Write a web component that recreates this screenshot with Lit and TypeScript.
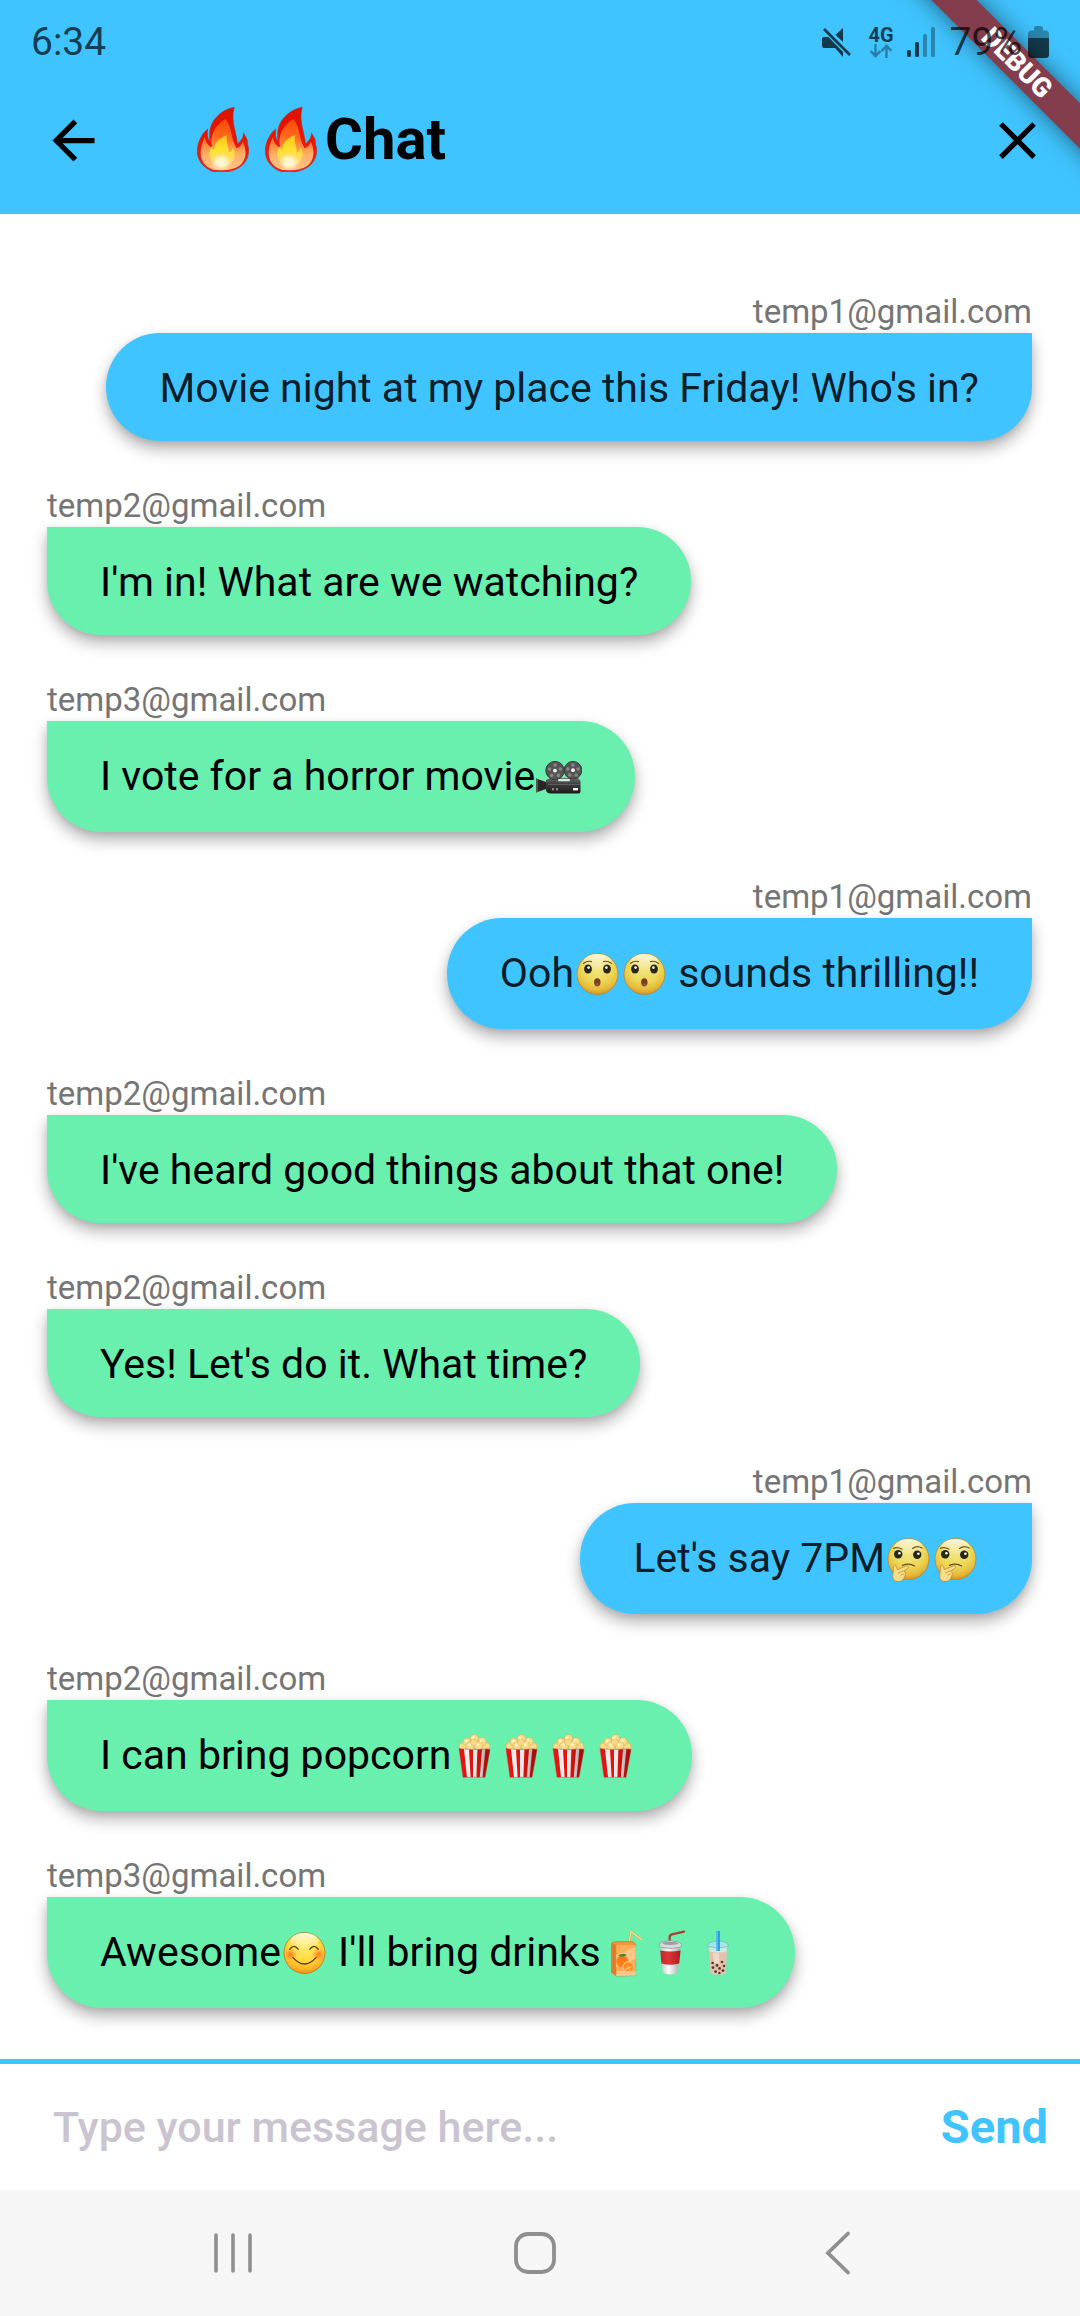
import { LitElement, html, css, svg } from "lit";
import { customElement, property, state } from "lit/decorators.js";

const sphere = svg`
  <defs>
    <radialGradient id="skin" cx="0.5" cy="0.3" r="0.72">
      <stop offset="0" stop-color="#f3e78c" />
      <stop offset="0.55" stop-color="#ecd858" />
      <stop offset="0.82" stop-color="#e6b93a" />
      <stop offset="1" stop-color="#d98b1e" />
    </radialGradient>
    <linearGradient id="shine" x1="0" y1="0" x2="0" y2="1">
      <stop offset="0" stop-color="#fff" stop-opacity="0.75" />
      <stop offset="1" stop-color="#fff" stop-opacity="0" />
    </linearGradient>
  </defs>
  <circle cx="23.5" cy="24" r="20.5" fill="url(#skin)" stroke="#b9821f" stroke-width="0.7" />
  <ellipse cx="23.5" cy="12" rx="14" ry="8" fill="url(#shine)" />`;

const art: Record<string, { label: string; box: string; shape: unknown }> = {
  "🔥": {
    label: "fire",
    box: "0 0 151 195",
    shape: svg`
      <defs>
        <linearGradient id="f1" x1="0" y1="0" x2="0" y2="1">
          <stop offset="0" stop-color="#d91400" /><stop offset="0.4" stop-color="#e81400" />
          <stop offset="1" stop-color="#f02020" />
        </linearGradient>
        <linearGradient id="f2" x1="0" y1="0" x2="0" y2="1">
          <stop offset="0" stop-color="#f5460a" /><stop offset="0.35" stop-color="#ff6a1c" />
          <stop offset="0.7" stop-color="#ffb066" /><stop offset="1" stop-color="#ffc489" />
        </linearGradient>
        <linearGradient id="f3" x1="0" y1="0" x2="0" y2="1">
          <stop offset="0" stop-color="#ffc21e" /><stop offset="0.45" stop-color="#ffe22a" />
          <stop offset="1" stop-color="#ffd890" />
        </linearGradient>
        <radialGradient id="f4"><stop offset="0.4" stop-color="#fff6cf" />
          <stop offset="1" stop-color="#fff0b0" stop-opacity="0" /></radialGradient>
      </defs>
      <path d="M108 1C84 4 36 32 37 82L37 104C30 94 29 80 31 66C16 78 1 104 1 133C1 164 24 187 48 194H90C126 188 150 164 150 130C150 119 146 116 146 100C143 90 138 84 135 78C135 90 130 101 117 111C118 85 96 45 108 1Z" fill="url(#f1)" stroke="#a33a32" stroke-width="2" />
      <path d="M82 36C104 62 96 92 115 124C125 119 131 113 133 104C143 126 143 146 136 160C128 178 110 186 88 189H50C25 182 8 162 11 130C13 114 18 102 23 90C24 104 30 114 44 122C36 88 50 58 82 36Z" fill="url(#f2)" />
      <path d="M88 85C66 92 50 106 50 130C46 128 45 122 44 118C34 130 34 150 42 162C52 180 88 182 102 164C112 150 112 134 104 122C102 130 98 134 92 138C94 118 82 108 88 85Z" fill="url(#f3)" />
      <ellipse cx="70" cy="166" rx="30" ry="28" fill="url(#f4)" />`,
  },
  "😯": {
    label: "hushed face",
    box: "0 0 47 49",
    shape: svg`${sphere}
      <ellipse cx="14" cy="19" rx="3.9" ry="4.5" fill="#2a2616" /><ellipse cx="33" cy="19" rx="3.9" ry="4.5" fill="#2a2616" />
      <circle cx="14.6" cy="17.6" r="1.3" fill="#fff" /><circle cx="32.4" cy="17.6" r="1.3" fill="#fff" />
      <path d="M9.5 13.5Q13 10.5 17.5 11.6M37.5 13.5Q34 10.5 29.5 11.6" fill="none" stroke="#6b541c" stroke-width="1.1" stroke-linecap="round" />
      <ellipse cx="23.3" cy="32.3" rx="3.2" ry="4.1" fill="#7a3d1e" /><ellipse cx="23.3" cy="34.2" rx="2" ry="1.5" fill="#94503a" />`,
  },
  "🤔": {
    label: "thinking face",
    box: "0 0 47 49",
    shape: svg`${sphere}
      <circle cx="13.2" cy="19.2" r="4.2" fill="#2a2616" /><circle cx="32.2" cy="19.7" r="4.2" fill="#2a2616" />
      <circle cx="14.4" cy="18.2" r="1.3" fill="#fff" /><circle cx="33.4" cy="18.7" r="1.3" fill="#fff" />
      <path d="M8.5 13.3Q12.5 11.8 17 14.2M27.5 13.4Q32 10 37 13" fill="none" stroke="#6b541c" stroke-width="1.2" stroke-linecap="round" />
      <path d="M17.5 30.4Q24 27.6 29.6 31" fill="none" stroke="#6b4a14" stroke-width="1.2" stroke-linecap="round" />
      <path d="M9.3 30.5C10.8 29.6 11.8 32 12.3 34.6L21 31C23.4 30.4 24.4 32.4 22.6 33.6L18.6 36C21 37 20.6 39.6 19.4 42C18.6 44.6 16.6 46.6 13.4 46.6C9.6 46.6 7.8 44.6 7.8 41.4C7.8 38 8.4 36.6 8.3 34.6Q8 31.4 9.3 30.5Z" fill="#f7dd86" stroke="#bb8a2c" stroke-width="0.8" />
      <path d="M13 38L18 36M15.5 40.2L19 38.8" stroke="#bb8a2c" stroke-width="0.7" fill="none" />`,
  },
  "😊": {
    label: "smiling face",
    box: "0 0 47 49",
    shape: svg`
      <defs>
        <radialGradient id="warm" cx="0.5" cy="0.3" r="0.72">
          <stop offset="0" stop-color="#ffee78" /><stop offset="0.55" stop-color="#ffd93a" />
          <stop offset="0.82" stop-color="#ffb527" /><stop offset="1" stop-color="#f08a14" />
        </radialGradient>
        <linearGradient id="gloss" x1="0" y1="0" x2="0" y2="1">
          <stop offset="0" stop-color="#fff" stop-opacity="0.8" /><stop offset="1" stop-color="#fff" stop-opacity="0" />
        </linearGradient>
        <radialGradient id="blush"><stop offset="0" stop-color="#ff6a1e" stop-opacity="0.85" />
          <stop offset="1" stop-color="#ff7a2e" stop-opacity="0" /></radialGradient>
      </defs>
      <circle cx="23.5" cy="24" r="20.5" fill="url(#warm)" stroke="#b5701a" stroke-width="0.7" />
      <ellipse cx="23.5" cy="12" rx="14" ry="8" fill="url(#gloss)" />
      <circle cx="9.5" cy="25.5" r="6.5" fill="url(#blush)" /><circle cx="37.5" cy="25.5" r="6.5" fill="url(#blush)" />
      <path d="M8.8 20.2Q13 14.6 17.2 20.2M28.8 20.2Q33 14.6 37.2 20.2M11.8 28.4Q23.5 41.6 35.2 28.4" fill="none" stroke="#5f3a10" stroke-width="1.3" stroke-linecap="round" />`,
  },
  "🎥": {
    label: "movie camera",
    box: "0 0 47 49",
    shape: svg`
      <defs><linearGradient id="cam" x1="0" y1="0" x2="0" y2="1">
        <stop offset="0" stop-color="#6d6d6d" /><stop offset="0.4" stop-color="#3c3c3c" /><stop offset="1" stop-color="#1c1c1c" />
      </linearGradient></defs>
      <path d="M1 25.5L11 29V36L1 39.6Z" fill="#262626" /><path d="M1 25.5L3 26.2V39L1 39.6Z" fill="#555" />
      <path d="M11 27L16 25H43L45.5 28V38.5Q45.5 40.4 43.5 40.4H15Q11 40 11 37Z" fill="url(#cam)" />
      <circle cx="20" cy="17.6" r="9.2" fill="#555" stroke="#3a3a3a" /><circle cx="38" cy="17.2" r="8.8" fill="#555" stroke="#3a3a3a" />
      <g fill="#868686"><circle cx="20" cy="12" r="1.8" /><circle cx="14.6" cy="16" r="1.8" /><circle cx="25.4" cy="16" r="1.8" /><circle cx="16.6" cy="22.4" r="1.8" /><circle cx="23.4" cy="22.4" r="1.8" />
      <circle cx="38" cy="12" r="1.8" /><circle cx="32.8" cy="16" r="1.8" /><circle cx="43.2" cy="16" r="1.8" /><circle cx="34.8" cy="22" r="1.8" /><circle cx="41.2" cy="22" r="1.8" /></g>
      <circle cx="20" cy="17.6" r="1.9" fill="#f4f4f4" /><circle cx="38" cy="17.2" r="1.9" fill="#f4f4f4" />
      <rect x="23" y="26" width="12" height="2.2" rx="1" fill="#e2e2e2" />
      <rect x="13" y="31" width="32" height="0.8" fill="#666" />
      <rect x="38" y="35" width="5" height="2.4" fill="#f4f4f4" /><rect x="17" y="35" width="2" height="2.4" fill="#8a8a8a" /><rect x="21" y="35" width="2" height="2.4" fill="#8a8a8a" />`,
  },
  "🍿": {
    label: "popcorn",
    box: "0 0 47 49",
    shape: svg`
      <defs><linearGradient id="side" x1="0" x2="1" y1="0" y2="0">
        <stop offset="0" stop-color="#000" stop-opacity="0" /><stop offset="0.55" stop-color="#000" stop-opacity="0.04" />
        <stop offset="1" stop-color="#300" stop-opacity="0.4" />
      </linearGradient></defs>
      <g fill="#f8dc8a" stroke="#d9a850" stroke-width="0.5">
        <circle cx="12" cy="14.6" r="4" /><circle cx="35" cy="14.6" r="4" /><circle cx="16" cy="10" r="4" /><circle cx="31" cy="9.6" r="4.2" />
        <circle cx="23.5" cy="6.6" r="4.2" /><circle cx="19" cy="14" r="4.2" /><circle cx="27.6" cy="13.6" r="4.4" /><circle cx="23" cy="10.4" r="3.4" />
      </g>
      <g fill="#fff2c0"><circle cx="22" cy="5.8" r="1.5" /><circle cx="15.4" cy="9" r="1.4" /><circle cx="30" cy="8.4" r="1.5" /><circle cx="18.6" cy="13" r="1.4" /><circle cx="27" cy="12.4" r="1.5" /></g>
      <path d="M8 16.6L12 45.3H34L39 17.4L36 16.8Q23 18.6 8 16.6Z" fill="#f4f1f0" />
      <path d="M8 16.6L13 17.3L16 45.3H12ZM18 17.6L22 17.7V45.3H19.6ZM26.4 17.6L31 17.3L28.8 45.3H25.4ZM34.4 17L39 17.4L34 45.3H31.6Z" fill="#e6150f" />
      <path d="M8 16.6L12 45.3H34L39 17.4L36 16.8Q23 18.6 8 16.6Z" fill="url(#side)" stroke="#a33" stroke-width="0.4" />`,
  },
  "🧃": {
    label: "beverage box",
    box: "0 0 47 49",
    shape: svg`
      <path d="M28 14.5L30 2.5L41 11" fill="none" stroke="#c9a93e" stroke-width="2.2" stroke-linejoin="round" />
      <path d="M28 14.5L30 2.5L41 11" fill="none" stroke="#ffe694" stroke-width="1.2" stroke-linejoin="round" />
      <path d="M10.6 14L14 12.6H32L34.6 15V46.6L15.4 47L10.6 43.6Z" fill="#f4953c" stroke="#d0752a" stroke-width="0.7" />
      <path d="M10.6 14L15.4 16V47L10.6 43.6Z" fill="#dd7c2c" /><path d="M15.4 16H34.6V46.6L15.4 47Z" fill="#fbae55" />
      <path d="M15.4 26L34.6 18V30L15.4 38Z" fill="#fdc688" /><path d="M15.4 42H34.6V46.6L15.4 47Z" fill="#f8c58a" />
      <circle cx="21.4" cy="32.6" r="6" fill="#ff7a1a" /><path d="M17 27Q21 23 26 26Q22 29 17 27Z" fill="#3f8f2f" />
      <path d="M22 40A5.4 5.4 0 0 1 32.6 36.6Q34 40 30 43Q25 44 22 40Z" fill="#ff8b1f" stroke="#ffd9a0" stroke-width="0.9" />
      <path d="M27.4 39L24 40.4M27.4 39L26.4 35.6M27.4 39L31.6 37.4M27.4 39L29.6 42.4" stroke="#ffd9a0" stroke-width="0.7" />`,
  },
  "🥤": {
    label: "cup with straw",
    box: "0 0 47 49",
    shape: svg`
      <defs><linearGradient id="paper" x1="0" x2="1" y1="0" y2="0">
        <stop offset="0" stop-color="#bfc3c4" /><stop offset="0.4" stop-color="#fbfbfb" /><stop offset="1" stop-color="#a9aeb0" />
      </linearGradient><linearGradient id="sleeve" x1="0" x2="1" y1="0" y2="0">
        <stop offset="0" stop-color="#b92a2a" /><stop offset="0.4" stop-color="#e03535" /><stop offset="1" stop-color="#a81f22" />
      </linearGradient></defs>
      <path d="M21.6 14V8.4Q21.8 6 24 5.4L36 2.6" fill="none" stroke="#a3453a" stroke-width="2.3" stroke-linecap="round" />
      <path d="M12.6 17H32L30 43.4Q22.4 47.4 14.8 43.4Z" fill="url(#paper)" />
      <path d="M12.2 21.4Q22.4 23.4 32.6 21.4L31.2 34.6Q22.4 37 13.4 34.6Z" fill="url(#sleeve)" />
      <path d="M11.4 15.4L13.6 13Q22.4 10.4 31 13L33.4 15.4V18Q22.4 21 11.4 18Z" fill="#d7dbdc" stroke="#8d9496" stroke-width="0.7" />
      <ellipse cx="22.4" cy="14.4" rx="8" ry="1.6" fill="#9aa0a2" />`,
  },
  "🧋": {
    label: "bubble tea",
    box: "0 0 47 49",
    shape: svg`
      <path d="M13.6 17H32.4L30.6 44.4Q23 47.6 15.6 44.4Z" fill="#c5ebe6" stroke="#9ab9b4" stroke-width="0.5" />
      <path d="M14.2 22.4Q23 24.6 32 22.4L30.4 44Q23 47 15.8 44Z" fill="#e3c2ab" />
      <path d="M18 24L24 24.6V34H19Z" fill="#efd8c8" />
      <path d="M12.4 17Q13 12.4 23 12.2Q33 12.4 33.8 17Q23 20.6 12.4 17Z" fill="#a5e6e2" stroke="#73bbb8" stroke-width="0.8" />
      <rect x="21.4" y="2" width="3.6" height="20" fill="#2c9fe6" /><rect x="21.4" y="2" width="1.3" height="20" fill="#63c0f5" />
      <g fill="#5b3426"><circle cx="17.6" cy="34" r="1.3" /><circle cx="22" cy="36.4" r="1.4" /><circle cx="27" cy="33" r="1.3" /><circle cx="29" cy="37" r="1.3" /><circle cx="18" cy="38.6" r="1.4" /><circle cx="24.6" cy="39.4" r="1.4" /><circle cx="20.6" cy="42.6" r="1.4" /><circle cx="28" cy="41.6" r="1.4" /><circle cx="24.4" cy="44" r="1.2" /></g>`,
  },
};

/** Splits a string into plain text and drawn emoji. */
function rich(text: string) {
  return Array.from(text).reduce<unknown[]>((out, ch) => {
    if (art[ch]) {
      out.push(html`<svg class="emoji" role="img" aria-label=${art[ch].label} viewBox=${art[ch].box} preserveAspectRatio="none">${art[ch].shape}</svg>`);
    } else if (typeof out[out.length - 1] === "string") {
      out[out.length - 1] = (out[out.length - 1] as string) + ch;
    } else {
      out.push(ch);
    }
    return out;
  }, []);
}

@customElement("chat-message")
export class ChatMessage extends LitElement {
  @property() sender = "";
  @property() text = "";
  @property({ type: Boolean, reflect: true }) mine = false;

  static styles = css`
    :host {
      display: flex;
      flex-direction: column;
      align-items: flex-start;
      gap: 3px;
    }
    :host([mine]) {
      align-items: flex-end;
    }
    .sender {
      font-size: 33px;
      line-height: 37px;
      color: #757575;
    }
    .bubble {
      margin: 0;
      padding: 32px 53px 30px;
      font-size: 41px;
      line-height: 46px;
      color: #000;
      background: #69f0ae;
      border-radius: 0 55px 55px 55px;
      box-shadow: 0 8px 16px rgba(0, 0, 0, 0.3), 0 2px 6px rgba(0, 0, 0, 0.08);
    }
    :host([mine]) .bubble {
      color: rgba(0, 0, 0, 0.87);
      background: #40c4ff;
      border-radius: 55px 0 55px 55px;
    }
    .emoji {
      width: 47px;
      height: 49px;
      vertical-align: -12px;
    }
  `;

  render() {
    return html`<span class="sender">${this.sender}</span>
      <p class="bubble">${rich(this.text)}</p>`;
  }
}

@customElement("app-root")
export class AppRoot extends LitElement {
  @state() private messages = [
    { sender: "temp1@gmail.com", text: "Movie night at my place this Friday! Who's in?" },
    { sender: "temp2@gmail.com", text: "I'm in! What are we watching?" },
    { sender: "temp3@gmail.com", text: "I vote for a horror movie🎥" },
    { sender: "temp1@gmail.com", text: "Ooh😯😯 sounds thrilling!!" },
    { sender: "temp2@gmail.com", text: "I've heard good things about that one!" },
    { sender: "temp2@gmail.com", text: "Yes! Let's do it. What time?" },
    { sender: "temp1@gmail.com", text: "Let's say 7PM🤔🤔" },
    { sender: "temp2@gmail.com", text: "I can bring popcorn🍿🍿🍿🍿" },
    { sender: "temp3@gmail.com", text: "Awesome😊 I'll bring drinks🧃🥤🧋" },
  ];
  private user = "temp1@gmail.com";

  static styles = css`
    :host {
      display: flex;
      flex-direction: column;
      position: relative;
      min-height: 100vh;
      background: #fff;
      font-family: Roboto, "Liberation Sans", sans-serif;
    }
    button {
      display: flex;
      align-items: center;
      justify-content: center;
      padding: 0;
      border: 0;
      background: none;
      font: inherit;
      color: inherit;
    }
    .top {
      background: #40c4ff;
    }
    .status {
      display: flex;
      align-items: center;
      justify-content: space-between;
      position: relative;
      z-index: 2;
      height: 46px;
      padding: 19px 31px 2px;
      font-size: 39px;
      line-height: 46px;
      color: rgba(0, 0, 0, 0.7);
    }
    .indicators {
      display: flex;
      align-items: center;
    }
    .mute {
      width: 30px;
      height: 30px;
      margin-right: 17px;
    }
    .network {
      display: flex;
      flex-direction: column;
      align-items: center;
      margin-right: 13px;
      font-size: 20px;
      line-height: 17px;
      font-weight: 700;
    }
    .arrows {
      width: 24px;
      height: 14px;
      opacity: 0.5;
    }
    .signal {
      width: 28px;
      height: 30px;
      margin-right: 15px;
    }
    .battery {
      width: 21px;
      height: 32px;
      margin-left: 6px;
    }
    .bar {
      display: flex;
      align-items: center;
      height: 147px;
      padding: 0 31px 0 42px;
      color: #000;
    }
    .icon {
      width: 63px;
      height: 63px;
    }
    h1 {
      flex: 1;
      margin: 0 0 4px 84px;
      font-size: 58px;
      line-height: 68px;
      font-weight: 700;
    }
    h1 .emoji {
      width: 52px;
      height: 65px;
      margin: 0 8px;
      vertical-align: -13px;
    }
    .ribbon {
      position: absolute;
      z-index: 1;
      top: 0;
      right: 0;
      width: 200px;
      height: 200px;
      overflow: hidden;
      pointer-events: none;
    }
    .ribbon span {
      position: absolute;
      top: 47px;
      right: -87px;
      width: 300px;
      transform: rotate(45deg);
      text-align: center;
      font-size: 27px;
      line-height: 32px;
      font-weight: 900;
      color: #fff;
      background: #833d4d;
      box-shadow: 0 0 24px rgba(0, 0, 0, 0.5);
    }
    .messages {
      flex: 1;
      display: flex;
      flex-direction: column;
      gap: 46px;
      padding: 79px 48px 40px 47px;
    }
    .composer {
      display: flex;
      align-items: center;
      gap: 24px;
      height: 126px;
      padding: 0 32px 0 53px;
      border-top: 5px solid #40c4ff;
    }
    input {
      flex: 1;
      min-width: 0;
      padding: 0;
      border: 0;
      outline: 0;
      background: none;
      font-family: inherit;
      font-size: 43px;
      line-height: 50px;
      font-weight: 500;
      color: #1d1b20;
    }
    input::placeholder {
      color: #cac4d0;
      opacity: 1;
    }
    .send {
      font-size: 47px;
      line-height: 56px;
      font-weight: 700;
      color: #40c4ff;
    }
    .system {
      display: flex;
      height: 126px;
      padding: 0 91px 0 82px;
      background: #f6f6f6;
      color: #8f8f8f;
    }
    .system button {
      flex: 1;
    }
    .system svg {
      width: 46px;
      height: 46px;
    }
  `;

  private status() {
    return html`<div class="status">
      <span>6:34</span>
      <div class="indicators">
        <svg class="mute" viewBox="0 0 30 30" fill="currentColor" role="img" aria-label="Muted">
          <path d="M3 10H7.5L22 25V30L14 21H3Q1 21 1 19V12Q1 10 3 10ZM22 1V15L14.5 8Z" />
          <path d="M3 2L29 28" stroke="currentColor" stroke-width="2.6" fill="none" />
        </svg>
        <div class="network">
          <span>4G</span>
          <svg class="arrows" viewBox="0 0 24 14" fill="none" stroke="currentColor" stroke-width="2.4" aria-hidden="true">
            <path d="M6.5 0V12M1.5 7L6.5 12.2L11.5 7M17.5 14V2M12.5 7L17.5 1.8L22.5 7" />
          </svg>
        </div>
        <svg class="signal" viewBox="0 0 28 30" fill="currentColor" role="img" aria-label="Signal">
          <rect x="0" y="23" width="4" height="7" rx="1.5" /><rect x="8" y="15" width="4" height="15" rx="1.5" />
          <rect x="16" y="7" width="4" height="23" rx="1.5" opacity=".45" /><rect x="24" y="0" width="4" height="30" rx="1.5" opacity=".45" />
        </svg>
        <span>79%</span>
        <svg class="battery" viewBox="0 0 21 32" fill="currentColor" role="img" aria-label="Battery">
          <path d="M0 12V8Q0 4.5 3.5 4.5H6V2Q6 0 8 0H13Q15 0 15 2V4.5H17.5Q21 4.5 21 8V12Z" opacity=".45" />
          <path d="M0 12H21V28.5Q21 32 17.5 32H3.5Q0 32 0 28.5Z" />
        </svg>
      </div>
    </div>`;
  }

  render() {
    return html`
      <header class="top">
        ${this.status()}
        <div class="bar">
          <button aria-label="Back">
            <svg class="icon" viewBox="0 0 24 24" fill="currentColor"><path d="M20 11H7.83l5.59-5.59L12 4l-8 8 8 8 1.41-1.41L7.83 13H20v-2z" /></svg>
          </button>
          <h1>${rich("🔥🔥Chat")}</h1>
          <button aria-label="Close">
            <svg class="icon" viewBox="0 0 24 24" fill="currentColor"><path d="M19 6.41L17.59 5 12 10.59 6.41 5 5 6.41 10.59 12 5 17.59 6.41 19 12 13.41 17.59 19 19 17.59 13.41 12z" /></svg>
          </button>
        </div>
      </header>
      <div class="ribbon"><span>DEBUG</span></div>
      <main class="messages">
        ${this.messages.map(
          (m) => html`<chat-message .sender=${m.sender} .text=${m.text} ?mine=${m.sender === this.user}></chat-message>`,
        )}
      </main>
      <form class="composer" @submit=${(e: Event) => e.preventDefault()}>
        <input type="text" aria-label="Message" placeholder="Type your message here..." />
        <button class="send" type="submit">Send</button>
      </form>
      <nav class="system">
        <button aria-label="Recent apps">
          <svg viewBox="0 0 46 46" stroke="currentColor" stroke-width="3.6" stroke-linecap="round"><path d="M6 5V41M23 5V41M40 5V41" /></svg>
        </button>
        <button aria-label="Home">
          <svg viewBox="0 0 46 46" fill="none" stroke="currentColor" stroke-width="3.8"><rect x="4" y="4" width="38" height="38" rx="12" /></svg>
        </button>
        <button aria-label="Back">
          <svg viewBox="0 0 46 46" fill="none" stroke="currentColor" stroke-width="3.8" stroke-linecap="round"><path d="M33 3.5L13 23L33 42.5" /></svg>
        </button>
      </nav>
    `;
  }
}
